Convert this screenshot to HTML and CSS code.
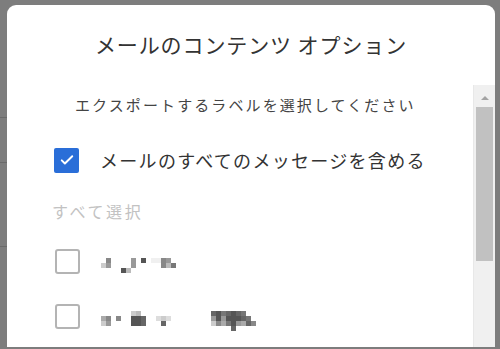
FILE: index.html
```html
<!DOCTYPE html>
<html lang="ja">
<head>
    <meta charset="UTF-8">
    <title>メールのコンテンツ オプション</title>
    <link rel="stylesheet" href="styles.css">
</head>
<body>
    <div class="backdrop-strip">
        <span class="strip-line line-a"></span>
        <span class="strip-line line-b"></span>
        <span class="strip-line line-c"></span>
    </div>

    <div class="dialog">
        <header class="dialog-header">
            <h1 class="dialog-title">メールのコンテンツ オプション</h1>
        </header>

        <div class="dialog-body">
            <main class="dialog-content">
                <p class="dialog-subtitle">エクスポートするラベルを選択してください</p>

                <label class="option-row">
                    <span class="checkbox checked">
                        <svg viewBox="0 0 24 24" width="18" height="18"><path d="M5 12.5l4.2 4.2L19 7" fill="none" stroke="#fff" stroke-width="2.6" stroke-linecap="round" stroke-linejoin="round"/></svg>
                    </span>
                    <span class="option-label">メールのすべてのメッセージを含める</span>
                </label>

                <div class="select-all">すべて選択</div>

                <label class="option-row label-row">
                    <span class="checkbox"></span>
                    <span class="mosaic mosaic-one"></span>
                </label>
                <label class="option-row label-row">
                    <span class="checkbox"></span>
                    <span class="mosaic mosaic-two"></span>
                </label>
            </main>

            <div class="scrollbar">
                <div class="scroll-arrow"><span class="arrow-up"></span></div>
                <div class="scroll-thumb"></div>
            </div>
        </div>
    </div>
</body>
</html>
```

FILE: styles.css
```css
html, body {
    margin: 0;
    height: 100%;
}

body {
    background: #7d7d7d;
    font-family: 'Noto Sans CJK JP', 'Noto Sans', sans-serif;
    display: flex;
    align-items: flex-start;
    overflow: hidden;
}

.backdrop-strip {
    width: 7px;
    height: 349px;
    flex-shrink: 0;
    display: flex;
    flex-direction: column;
}
.strip-line {
    display: block;
    height: 1px;
    background: #6a6a6a;
}
.line-a { margin-top: 117px; }
.line-b { margin-top: 44px; }
.line-c { margin-top: 83px; }

/* Dialog */
.dialog {
    width: 488px;
    height: 342px;
    margin-top: 5px;
    background: #fff;
    border-radius: 9px 9px 0 0;
    display: flex;
    flex-direction: column;
    overflow: hidden;
}

.dialog-header {
    height: 80px;
    flex-shrink: 0;
    padding-top: 24px;
    box-sizing: border-box;
}
.dialog-title {
    margin: 0;
    text-align: center;
    font-size: 21px;
    font-weight: 400;
    line-height: 30px;
    letter-spacing: 0.9px;
    color: #333;
}

.dialog-body {
    flex-grow: 1;
    display: flex;
    min-height: 0;
}

.dialog-content {
    flex-grow: 1;
    padding: 0 0 0 47px;
}

.dialog-subtitle {
    margin: 8px 0 0 21px;
    font-size: 15px;
    line-height: 24px;
    letter-spacing: 2.1px;
    color: #444;
}

/* Options */
.option-row {
    display: flex;
    align-items: center;
    height: 30px;
    margin-top: 28px;
}
.label-row {
    margin-top: 24px;
}
.label-row + .label-row {
    margin-top: 25px;
}

.checkbox {
    width: 21px;
    height: 21px;
    border: 2px solid #b4b4b4;
    border-radius: 3px;
    flex-shrink: 0;
    display: flex;
    align-items: center;
    justify-content: center;
    margin-left: 1px;
}
.checkbox.checked {
    width: 25px;
    height: 25px;
    margin-left: 0;
    border: none;
    border-radius: 2px;
    background: #2a6ed8;
}

.option-label {
    margin-left: 21px;
    font-size: 18px;
    letter-spacing: 1.3px;
    color: #333;
}

.select-all {
    margin: 25px 0 0 -2px;
    font-size: 16px;
    line-height: 22px;
    letter-spacing: 2.6px;
    color: #c2c2c2;
}

/* Redacted label names, drawn as a pixel mosaic */
.mosaic {
    display: block;
    width: 5px;
    height: 5px;
    margin-left: 21px;
    align-self: flex-start;
}
.mosaic-one {
    margin-top: 12px;
    box-shadow:
        0 0 #ccc, 5px 0 #888, 0 5px #ccc, 5px 5px #999,
        20px 10px #555, 25px 10px #bbb,
        30px 0 #999, 30px 5px #999,
        40px 0 #555,
        50px 0 #f0f0f0, 55px 0 #f0f0f0,
        60px 0 #888, 65px 0 #999, 60px 5px #888, 65px 5px #bbb, 70px 5px #777;
}
.mosaic-two {
    margin-top: 10px;
    box-shadow:
        0 5px #aaa, 5px 5px #888, 0 10px #ccc, 5px 10px #999,
        15px 5px #888,
        30px 0 #ccc, 35px 0 #bbb,
        30px 5px #555, 35px 5px #555, 40px 5px #666,
        30px 10px #555, 35px 10px #555, 40px 10px #666,
        55px 5px #ddd, 60px 5px #ccc, 65px 5px #ddd, 60px 10px #666,
        110px 0 #666, 115px 0 #555, 120px 0 #777, 125px 0 #666, 130px 0 #555, 135px 0 #666, 140px 0 #777,
        110px 5px #999, 115px 5px #555, 120px 5px #999, 125px 5px #555, 130px 5px #555, 135px 5px #555, 140px 5px #666, 145px 5px #777,
        110px 10px #ccc, 115px 10px #888, 120px 10px #aaa, 125px 10px #777, 130px 10px #555, 135px 10px #999, 140px 10px #aaa, 145px 10px #666, 150px 10px #888,
        130px 15px #666;
}

/* Scrollbar */
.scrollbar {
    width: 21px;
    flex-shrink: 0;
    background: #f0f0f0;
    border-left: 1px solid #e8e8e8;
    display: flex;
    flex-direction: column;
    align-items: center;
}
.scroll-arrow {
    height: 19px;
    width: 100%;
    margin-top: 3px;
    display: flex;
    align-items: center;
    justify-content: center;
}
.arrow-up {
    width: 0;
    height: 0;
    border-left: 4px solid transparent;
    border-right: 4px solid transparent;
    border-bottom: 4px solid #a3a3a3;
}
.scroll-thumb {
    width: 17px;
    height: 154px;
    background: #c1c1c1;
}
```
